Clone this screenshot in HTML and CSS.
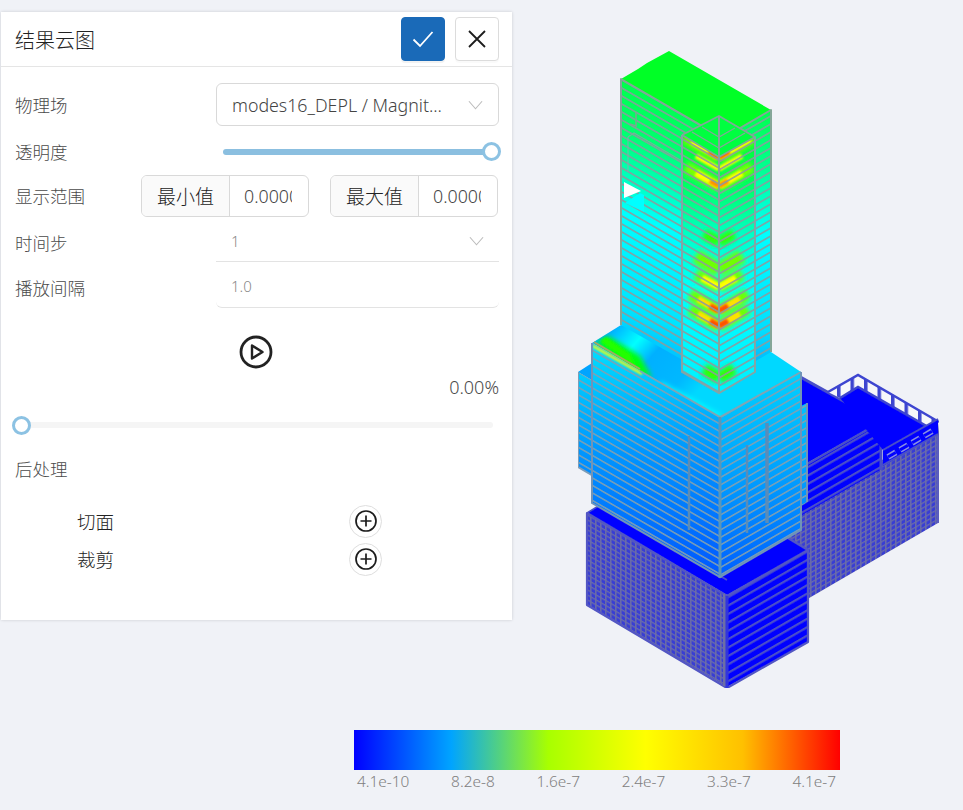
FILE: index.html
```html
<!DOCTYPE html>
<html lang="zh">
<head>
<meta charset="utf-8">
<title>结果云图</title>
<link rel="stylesheet" href="styles.css">
</head>
<body>
<div class="app">
  <div class="top">
    <section class="panel">
      <header class="panel-head">
        <h1 class="panel-title">结果云图</h1>
        <button class="btn btn-primary" aria-label="确认"><svg class="ico-head" viewBox="0 0 24 24"><path d="M2.500 12.500 9 19 21.500 5" /></svg></button>
        <button class="btn btn-plain" aria-label="关闭"><svg class="ico-head" viewBox="0 0 24 24"><path d="M4 4 20 20M20 4 4 20" /></svg></button>
      </header>
      <div class="panel-body">
        <div class="row row-field">
          <span class="label">物理场</span>
          <div class="select"><span class="select-text">modes16_DEPL / Magnit...</span><svg class="chev" viewBox="0 0 16 10"><path d="M1 1 8 9 15 1"/></svg></div>
        </div>
        <div class="row row-opacity">
          <span class="label">透明度</span>
          <div class="slider slider-full"><span class="knob knob-end"></span></div>
        </div>
        <div class="row row-range">
          <span class="label">显示范围</span>
          <div class="addon-group"><span class="addon">最小值</span><span class="addon-input">0.0000</span></div>
          <div class="addon-group group-b"><span class="addon">最大值</span><span class="addon-input">0.0000</span></div>
        </div>
        <div class="row row-step">
          <span class="label">时间步</span>
          <div class="line-field"><span>1</span><svg class="chev" viewBox="0 0 16 10"><path d="M1 1 8 9 15 1"/></svg></div>
        </div>
        <div class="row row-interval">
          <span class="label">播放间隔</span>
          <div class="line-field"><span>1.0</span></div>
        </div>
        <div class="play-row">
          <svg class="play" viewBox="0 0 34 34"><circle cx="17" cy="17" r="15" /><path d="M13 10.500 23.500 17 13 23.500Z"/></svg>
        </div>
        <div class="percent">0.00%</div>
        <div class="progress"><span class="knob knob-start"></span></div>
        <div class="label post-title">后处理</div>
        <div class="post-row post-first">
          <span class="post-name">切面</span>
          <button class="circle-btn" aria-label="添加切面"><svg viewBox="0 0 24 24"><circle cx="12" cy="12" r="10"/><path d="M12 6.500V17.500M6.500 12H17.500"/></svg></button>
        </div>
        <div class="post-row">
          <span class="post-name">裁剪</span>
          <button class="circle-btn" aria-label="添加裁剪"><svg viewBox="0 0 24 24"><circle cx="12" cy="12" r="10"/><path d="M12 6.500V17.500M6.500 12H17.500"/></svg></button>
        </div>
      </div>
    </section>
    <svg class="model" viewBox="512 0 451 730" aria-hidden="true">
      <defs>
        <pattern id="lineL" width="8" height="8" patternUnits="userSpaceOnUse" patternTransform="skewY(30)"><rect y="0" width="8" height="2" fill="#8b9a9e" fill-opacity=".88"/></pattern>
        <pattern id="lineR" width="8" height="8" patternUnits="userSpaceOnUse" patternTransform="skewY(-30)"><rect y="0" width="8" height="2" fill="#8b9a9e" fill-opacity=".88"/></pattern>
        <pattern id="lineLP" width="8" height="7.500" patternUnits="userSpaceOnUse" patternTransform="skewY(30)"><rect y="0" width="8" height="1.800" fill="#82a0b0" fill-opacity=".92"/></pattern>
        <pattern id="lineRP" width="8" height="7.500" patternUnits="userSpaceOnUse" patternTransform="skewY(-30)"><rect y="0" width="8" height="1.800" fill="#82a0b0" fill-opacity=".92"/></pattern>
        <pattern id="lineBlue" width="8" height="8.400" patternUnits="userSpaceOnUse" patternTransform="skewY(-30)"><rect y="0" width="8" height="2.400" fill="#4c50c8"/></pattern>
        <pattern id="meshL" width="5" height="5" patternUnits="userSpaceOnUse" patternTransform="skewY(30)"><rect width="5" height="5" fill="#383dd4"/><rect width="5" height="1.500" fill="#6a6ca8"/><rect width="1.500" height="5" fill="#6a6ca8"/></pattern>
        <pattern id="meshR" width="5" height="5" patternUnits="userSpaceOnUse" patternTransform="skewY(-30)"><rect width="5" height="5" fill="#383dd4"/><rect width="5" height="1.500" fill="#6a6ca8"/><rect width="1.500" height="5" fill="#6a6ca8"/></pattern>
        <pattern id="posts" width="13.500" height="10" patternUnits="userSpaceOnUse"><rect width="3.500" height="10" fill="#3c44d0"/></pattern>
        <linearGradient id="towerG" gradientUnits="userSpaceOnUse" x1="670" y1="80" x2="570" y2="385">
          <stop offset="0" stop-color="#00ff40"/><stop offset=".2" stop-color="#00ff70"/><stop offset=".44" stop-color="#00ffff"/><stop offset=".72" stop-color="#00e4ff"/><stop offset=".9" stop-color="#00a8ff"/><stop offset="1" stop-color="#0090ff"/>
        </linearGradient>
        <linearGradient id="towerRG" gradientUnits="userSpaceOnUse" x1="0" y1="100" x2="0" y2="370">
          <stop offset="0" stop-color="#00ff40"/><stop offset=".25" stop-color="#00ff90"/><stop offset=".5" stop-color="#00ffff"/><stop offset=".85" stop-color="#00e0ff"/><stop offset="1" stop-color="#00b0ff"/>
        </linearGradient>
        <linearGradient id="innerG" gradientUnits="userSpaceOnUse" x1="0" y1="120" x2="0" y2="395">
          <stop offset="0" stop-color="#00ff30"/><stop offset=".2" stop-color="#00ff50"/><stop offset=".42" stop-color="#00ffc8"/><stop offset=".62" stop-color="#00ffff"/><stop offset="1" stop-color="#00f0ff"/>
        </linearGradient>
        <linearGradient id="podL" gradientUnits="userSpaceOnUse" x1="0" y1="345" x2="0" y2="575">
          <stop offset="0" stop-color="#00e0ff"/><stop offset=".45" stop-color="#0098ff"/><stop offset="1" stop-color="#0058ff"/>
        </linearGradient>
        <linearGradient id="podR" gradientUnits="userSpaceOnUse" x1="0" y1="375" x2="0" y2="575">
          <stop offset="0" stop-color="#00d0ff"/><stop offset=".5" stop-color="#00a0ff"/><stop offset="1" stop-color="#0060ff"/>
        </linearGradient>
        <linearGradient id="podTop" gradientUnits="userSpaceOnUse" x1="612" y1="330" x2="690" y2="400">
          <stop offset="0" stop-color="#00b0ff"/><stop offset=".25" stop-color="#00ffff"/><stop offset=".45" stop-color="#00b0ff"/><stop offset=".8" stop-color="#00b8ff"/><stop offset="1" stop-color="#00d8ff"/>
        </linearGradient>
        <clipPath id="cInnerL"><polygon points="682,135 719,157 719,393 682,372"/></clipPath>
        <clipPath id="cInnerR"><polygon points="719,157 755,137 755,372 719,393"/></clipPath>
        <clipPath id="cPodTop"><polygon points="592,343 621,325 723,384 771,352 801,372 720,417"/></clipPath>
        <filter id="soft" x="-40%" y="-80%" width="180%" height="260%"><feGaussianBlur stdDeviation="2.500"/></filter>
        <filter id="softer" x="-40%" y="-80%" width="180%" height="260%"><feGaussianBlur stdDeviation="1.300"/></filter>
        <filter id="aa" x="0" y="0" width="100%" height="100%"><feGaussianBlur stdDeviation=".55"/></filter>
      </defs>
      <g filter="url(#aa)">
        <!-- right block -->
        <polygon points="780,520 882,460 938,428 938,523 780,615" fill="url(#meshR)"/>
        <line x1="938" y1="421" x2="938" y2="523" stroke="#5a5cc0" stroke-width="2.500"/>
        <polygon points="795,374 880,422 795,470" fill="#0505ff"/>
        <polygon points="795,471 880,422 880,470 795,519" fill="#0505ff"/>
        <polygon points="795,471 880,422 880,470 795,519" fill="url(#lineBlue)"/>
        <polyline points="795,374 881,422 881,470" fill="none" stroke="#4a50c8" stroke-width="3"/>
        <polyline points="795,471 881,422" fill="none" stroke="#4a50c8" stroke-width="2.500"/>
        <polygon points="840,398 858,387 928,427 938,430 883,465 883,450" fill="#0505ff"/>
        <polygon points="828,392 858,375 939,422 938,432 928,427 858,387 840,398" fill="#f6f7fa"/>
        <polygon points="828,392 858,375 939,422 938,432 928,427 858,387 840,398" fill="url(#posts)"/>
        <polyline points="828,392 858,375 939,422" fill="none" stroke="#3c44d0" stroke-width="2.500"/>
        <polyline points="840,398 858,387 930,428" fill="none" stroke="#3c44d0" stroke-width="2.500"/>
        <polygon points="883,450 938,419 938,434 883,466" fill="#0505ff"/>
        <polyline points="883,450 938,419" fill="none" stroke="#4a50c8" stroke-width="2"/>
        <polyline points="883,465 938,434" fill="none" stroke="#4a50c8" stroke-width="2"/>
        <line x1="888" y1="457" x2="934" y2="430" stroke="#8a90e0" stroke-width="6" stroke-dasharray="9 5"/>
        <line x1="888" y1="457" x2="934" y2="430" stroke="#0505ff" stroke-width="3" stroke-dasharray="9 5"/>
        <!-- base block -->
        <polygon points="587,513 602,504 788,538 808,550 727,595" fill="#0505ff"/>
        <polygon points="587,513 727,595 727,687 587,605" fill="url(#meshL)"/>
        <polygon points="727,595 808,550 808,642 727,687" fill="#0505ff"/>
        <polygon points="727,595 808,550 808,642 727,687" fill="url(#lineBlue)"/>
        <polyline points="587,513 600,505 727,580" fill="none" stroke="#4a50c8" stroke-width="1.500"/>
        <polyline points="788,538 808,550 808,642 727,688 587,605 587,513 727,596 808,550" fill="none" stroke="#5256c4" stroke-width="2.200" stroke-linejoin="round"/>
        <line x1="727" y1="596" x2="727" y2="688" stroke="#3036dc" stroke-width="3"/>
        <line x1="724" y1="594" x2="724" y2="686" stroke="#6c6ea6" stroke-width="2"/>
        <!-- podium wings -->
        <polygon points="578,372 592,363 640,385 612,392" fill="#00a4ff"/>
        <polygon points="578,372 612,392 612,487 578,467" fill="url(#podL)"/>
        <polygon points="578,372 612,392 612,487 578,467" fill="url(#lineLP)"/>
        <polyline points="578,372 578,467 612,487 612,390" fill="none" stroke="#7d9db8" stroke-width="2"/>
        <!-- podium -->
        <polygon points="592,343 621,325 771,352 801,372 720,417" fill="url(#podTop)"/>
        <g clip-path="url(#cPodTop)">
          <polygon points="596,343 608,336 640,356 652,378 636,372" fill="#00ff10" filter="url(#soft)"/>
          <polygon points="600,341 606,337 630,354 636,368" fill="#20ff00" filter="url(#softer)"/>
          <line x1="660" y1="384" x2="720" y2="417" stroke="#00ffff" stroke-width="5" filter="url(#soft)"/>
        </g>
        <polygon points="592,343 720,417 720,577 592,503" fill="url(#podL)"/>
        <polygon points="720,417 801,372 801,530 720,577" fill="url(#podR)"/>
        <polygon points="592,343 720,417 720,577 592,503" fill="url(#lineLP)"/>
        <polygon points="720,417 801,372 801,530 720,577" fill="url(#lineRP)"/>
        <polygon points="801,406 807,403 807,502 801,506" fill="url(#podR)"/>
        <polygon points="801,406 807,403 807,502 801,506" fill="url(#lineRP)"/>
        <line x1="593" y1="346" x2="642" y2="374" stroke="#ffff00" stroke-width="2.500" filter="url(#softer)"/>
        <line x1="594" y1="342" x2="640" y2="369" stroke="#a8a860" stroke-width="2"/>
        <polyline points="640,371 720,417 801,372" fill="none" stroke="#7fa5b5" stroke-width="2"/>
        <line x1="720" y1="417" x2="720" y2="578" stroke="#5a96b8" stroke-width="3"/>
        <polyline points="801,372 801,530 720,577 592,503 592,343" fill="none" stroke="#6f94b8" stroke-width="2"/>
        <line x1="689" y1="436" x2="689" y2="530" stroke="#5a8cb8" stroke-width="2.500"/>
        <line x1="747" y1="445" x2="747" y2="533" stroke="#5a8cb8" stroke-width="2.500"/>
        <line x1="767" y1="423" x2="767" y2="523" stroke="#5a8cb8" stroke-width="3.500"/>
        <line x1="807" y1="403" x2="807" y2="502" stroke="#6f94b8" stroke-width="2"/>
        <!-- tower -->
        <polygon points="621,79 723,138 723,383 621,325" fill="url(#towerG)"/>
        <polygon points="723,138 771,110 771,352 723,380" fill="url(#towerRG)"/>
        <polygon points="621,79 723,138 723,383 621,325" fill="url(#lineL)"/>
        <polygon points="723,138 771,110 771,352 723,380" fill="url(#lineR)"/>
        <polygon points="621,79 638,69 647,63 669,51 771,110 723,138" fill="#00ff26"/>
        <polyline points="621,325 621,79 723,138 771,110 771,352" fill="none" stroke="#84a698" stroke-width="2" stroke-linejoin="round"/>
        <polyline points="636,113 636,126 630,124" fill="none" stroke="#7aa890" stroke-width="1.500"/>
        <polyline points="628,137 634,133 682,161" fill="none" stroke="#7aae9c" stroke-width="1.200"/>
        <line x1="628" y1="137" x2="628" y2="172" stroke="#7ab4ac" stroke-width="1"/>
        <polygon points="625,203 640,193 644,195 644,212 640,210" fill="#00ffff"/>
        <polygon points="624,182 641,191 624,198" fill="#ffffff"/>
        <!-- inner core -->
        <polygon points="682,135 719,116 755,137 719,157" fill="#00ff40"/>
        <polygon points="682,135 719,157 719,393 682,372" fill="url(#innerG)"/>
        <polygon points="719,157 755,137 755,372 719,393" fill="url(#innerG)"/>
        <g clip-path="url(#cInnerL)">
          <line x1="685" y1="136" x2="719" y2="157" stroke="#70ff00" stroke-width="14" filter="url(#soft)"/>
          <line x1="692" y1="141" x2="719" y2="157" stroke="#ffff00" stroke-width="7" filter="url(#softer)"/>
          <line x1="709" y1="151" x2="719" y2="157" stroke="#ff6000" stroke-width="6" filter="url(#softer)"/>
          <line x1="696" y1="156" x2="719" y2="169" stroke="#ffff00" stroke-width="5" filter="url(#softer)"/>
          <line x1="686" y1="167" x2="719" y2="186" stroke="#80ff00" stroke-width="11" filter="url(#soft)"/>
          <line x1="696" y1="173" x2="719" y2="186" stroke="#ffff00" stroke-width="7" filter="url(#softer)"/>
          <line x1="710" y1="181" x2="719" y2="186" stroke="#ff9000" stroke-width="5" filter="url(#softer)"/>
          <line x1="704" y1="234" x2="719" y2="242" stroke="#30ff00" stroke-width="11" filter="url(#soft)"/>
          <line x1="696" y1="256" x2="719" y2="270" stroke="#70ff00" stroke-width="14" filter="url(#soft)"/>
          <line x1="696" y1="274" x2="719" y2="287" stroke="#70ff00" stroke-width="12" filter="url(#soft)"/>
          <line x1="702" y1="278" x2="719" y2="287" stroke="#ffff00" stroke-width="7" filter="url(#softer)"/>
          <line x1="690" y1="294" x2="719" y2="311" stroke="#70ff00" stroke-width="12" filter="url(#soft)"/>
          <line x1="698" y1="299" x2="719" y2="311" stroke="#ffe000" stroke-width="7" filter="url(#softer)"/>
          <line x1="710" y1="306" x2="719" y2="311" stroke="#ff5000" stroke-width="6" filter="url(#softer)"/>
          <line x1="690" y1="309" x2="719" y2="326" stroke="#70ff00" stroke-width="12" filter="url(#soft)"/>
          <line x1="698" y1="314" x2="719" y2="326" stroke="#ffe000" stroke-width="7" filter="url(#softer)"/>
          <line x1="710" y1="321" x2="719" y2="326" stroke="#ff5000" stroke-width="6" filter="url(#softer)"/>
          <line x1="704" y1="369" x2="719" y2="378" stroke="#30ff00" stroke-width="12" filter="url(#soft)"/>
        </g>
        <g clip-path="url(#cInnerR)">
          <line x1="719" y1="157" x2="753" y2="136" stroke="#70ff00" stroke-width="14" filter="url(#soft)"/>
          <line x1="719" y1="157" x2="750" y2="139" stroke="#ffff00" stroke-width="7" filter="url(#softer)"/>
          <line x1="719" y1="157" x2="729" y2="151" stroke="#ff6000" stroke-width="6" filter="url(#softer)"/>
          <line x1="719" y1="169" x2="742" y2="156" stroke="#ffff00" stroke-width="5" filter="url(#softer)"/>
          <line x1="719" y1="186" x2="752" y2="167" stroke="#80ff00" stroke-width="11" filter="url(#soft)"/>
          <line x1="719" y1="186" x2="742" y2="173" stroke="#ffff00" stroke-width="7" filter="url(#softer)"/>
          <line x1="719" y1="186" x2="728" y2="181" stroke="#ff9000" stroke-width="5" filter="url(#softer)"/>
          <line x1="719" y1="242" x2="734" y2="234" stroke="#30ff00" stroke-width="11" filter="url(#soft)"/>
          <line x1="719" y1="270" x2="742" y2="256" stroke="#70ff00" stroke-width="14" filter="url(#soft)"/>
          <line x1="719" y1="287" x2="742" y2="274" stroke="#70ff00" stroke-width="12" filter="url(#soft)"/>
          <line x1="719" y1="287" x2="736" y2="278" stroke="#ffff00" stroke-width="7" filter="url(#softer)"/>
          <line x1="719" y1="311" x2="748" y2="294" stroke="#70ff00" stroke-width="12" filter="url(#soft)"/>
          <line x1="719" y1="311" x2="740" y2="299" stroke="#ffe000" stroke-width="7" filter="url(#softer)"/>
          <line x1="719" y1="311" x2="728" y2="306" stroke="#ff5000" stroke-width="6" filter="url(#softer)"/>
          <line x1="719" y1="326" x2="748" y2="309" stroke="#70ff00" stroke-width="12" filter="url(#soft)"/>
          <line x1="719" y1="326" x2="740" y2="314" stroke="#ffe000" stroke-width="7" filter="url(#softer)"/>
          <line x1="719" y1="326" x2="728" y2="321" stroke="#ff5000" stroke-width="6" filter="url(#softer)"/>
          <line x1="719" y1="378" x2="734" y2="369" stroke="#30ff00" stroke-width="12" filter="url(#soft)"/>
        </g>
        <polygon points="682,135 719,157 719,393 682,372" fill="url(#lineL)"/>
        <polygon points="719,157 755,137 755,372 719,393" fill="url(#lineR)"/>
        <polyline points="682,135 719,116 755,137 719,157 682,135" fill="none" stroke="#84a698" stroke-width="1.800"/>
        <polyline points="692,132 719,148 745,133" fill="none" stroke="#84a698" stroke-width="1.300"/>
        <polyline points="702,127 719,137 735,128" fill="none" stroke="#84a698" stroke-width="1.300"/>
        <line x1="719" y1="116" x2="719" y2="393" stroke="#86a39c" stroke-width="2"/>
        <polyline points="682,135 682,372 719,393 755,372 755,137" fill="none" stroke="#84a4a6" stroke-width="2"/>
      </g>
    </svg>
  </div>
  <div class="legend">
    <div class="legend-bar"></div>
    <div class="legend-ticks"><span>4.1e-10</span><span>8.2e-8</span><span>1.6e-7</span><span>2.4e-7</span><span>3.3e-7</span><span>4.1e-7</span></div>
  </div>
</div>
</body>
</html>
```
FILE: styles.css
```css
* { box-sizing: border-box; }
html, body { margin: 0; height: 100%; }
body {
  background: #f0f2f7;
  font-family: "Noto Sans", "Noto Sans CJK SC", sans-serif;
  font-weight: 300;
  overflow: hidden;
}
.app { width: 963px; height: 810px; }
.top { display: flex; height: 730px; }
.panel {
  width: 511px;
  height: 608px;
  margin: 12px 0 0 1px;
  background: #fff;
  box-shadow: 0 0 3px rgba(0, 0, 0, .16);
  flex: none;
}
.model { width: 451px; height: 730px; flex: none; display: block; }

.panel-head {
  display: flex;
  align-items: center;
  height: 55px;
  padding: 0 13px 0 14px;
  border-bottom: 1px solid #e5e5e5;
  gap: 10px;
}
.panel-title {
  margin: 0 auto 0 0;
  font-size: 20px;
  font-weight: 300;
  color: #222;
}
.btn {
  width: 44px;
  height: 44px;
  border-radius: 4px;
  padding: 0;
  display: flex;
  align-items: center;
  justify-content: center;
  cursor: pointer;
}
.btn-primary { background: #1a6ab8; border: 1px solid #1a6ab8; box-shadow: 0 2px 0 rgba(0,0,0,.05); }
.btn-plain { background: #fff; border: 1px solid #dcdcdc; box-shadow: 0 2px 0 rgba(0,0,0,.02); }
.ico-head { width: 24px; height: 24px; fill: none; stroke-width: 1.800; }
.btn-primary .ico-head { stroke: #fff; }
.btn-plain .ico-head { stroke: #1c1c1c; }

.panel-body { padding: 0 13px 0 14px; }
.row { display: flex; align-items: center; }
.label { font-size: 17.500px; color: #4a4a4a; line-height: 22px; white-space: nowrap; }
.row-field { height: 43px; margin-top: 16px; justify-content: space-between; }
.select {
  width: 283px;
  height: 43px;
  border: 1px solid #d9d9d9;
  border-radius: 6px;
  display: flex;
  align-items: center;
  justify-content: space-between;
  padding: 0 15px;
  font-size: 17.800px;
  color: #444;
}
.select-text { white-space: nowrap; }
.chev { width: 15px; height: 10px; fill: none; stroke: #bcbcbc; stroke-width: 1.200; flex: none; }

.row-opacity { height: 49px; padding-top: 2px; justify-content: space-between; }
.slider-full {
  position: relative;
  width: 269px;
  height: 6px;
  margin-right: 7px;
  background: #8bbfe0;
  border-radius: 3px;
}
.knob {
  position: absolute;
  width: 19px;
  height: 19px;
  border-radius: 50%;
  background: #fff;
  border: 3px solid #8cc2e3;
  top: -6.500px;
}
.knob-end { right: -9px; }
.knob-start { left: -11px; }

.row-range { height: 42px; }
.row-range .label { width: 126px; flex: none; }
.addon-group {
  display: flex;
  height: 42px;
  border: 1px solid #d9d9d9;
  border-radius: 6px;
  overflow: hidden;
  width: 168px;
}
.group-b { margin-left: 21px; }
.addon {
  width: 88px;
  flex: none;
  background: #fafafa;
  border-right: 1px solid #d9d9d9;
  display: flex;
  align-items: center;
  justify-content: center;
  font-size: 19px;
  color: #222;
}
.addon-input {
  flex: 1;
  min-width: 0;
  margin: 0 16px 0 14px;
  overflow: hidden;
  white-space: nowrap;
  font-size: 17.800px;
  line-height: 40px;
  color: #444;
}

.row-step { height: 44px; margin-top: 1px; justify-content: space-between; }
.row-interval { height: 46px; justify-content: space-between; }
.row-step .label, .row-interval .label { margin-top: 5px; }
.line-field {
  width: 283px;
  height: 44px;
  border-bottom: 1px solid #e3e3e3;
  display: flex;
  align-items: center;
  justify-content: space-between;
  padding: 3px 15px 0;
  font-size: 15px;
  color: #888;
}
.row-interval .line-field { height: 46px; padding-top: 2px; border-radius: 0 0 6px 6px; }

.play-row { display: flex; justify-content: center; padding-top: 27px; margin-left: -3px; height: 78px; }
.play { width: 34px; height: 34px; fill: none; stroke: #222; stroke-width: 2.800; stroke-linejoin: round; }
.play path { stroke-width: 2.400; }
.percent { height: 24px; margin-top: -11px; margin-right: 0; text-align: right; font-size: 18px; line-height: 24px; color: #4a4a4a; }
.progress {
  position: relative;
  width: 470px;
  height: 6px;
  margin: 23px 0 0 8px;
  background: #f5f5f5;
  border-radius: 3px;
}
.post-title { margin-top: 30px; }
.post-row {
  display: flex;
  align-items: center;
  justify-content: space-between;
  width: 305px;
  height: 32px;
  margin: 6px 0 0 62px;
}
.post-first { margin-top: 25px; }
.post-name { font-size: 18.500px; color: #222; }
.circle-btn {
  width: 33px;
  height: 33px;
  padding: 0;
  border: 1px solid #dedede;
  border-radius: 50%;
  background: #fff;
  display: flex;
  align-items: center;
  justify-content: center;
  cursor: pointer;
}
.circle-btn svg { width: 24px; height: 24px; fill: none; stroke: #1c1c1c; stroke-width: 1.700; }

.legend { width: 486px; margin-left: 354px; }
.legend-bar {
  height: 40px;
  background: linear-gradient(90deg, #0000ff 0%, #00a4ff 20%, #a8ff00 40%, #ffff00 60%, #ffc000 80%, #ff0000 100%);
}
.legend-ticks {
  display: flex;
  justify-content: space-between;
  padding: 2px 4px 0 3px;
  font-size: 15.400px;
  line-height: 20px;
  color: #808080;
}
```
